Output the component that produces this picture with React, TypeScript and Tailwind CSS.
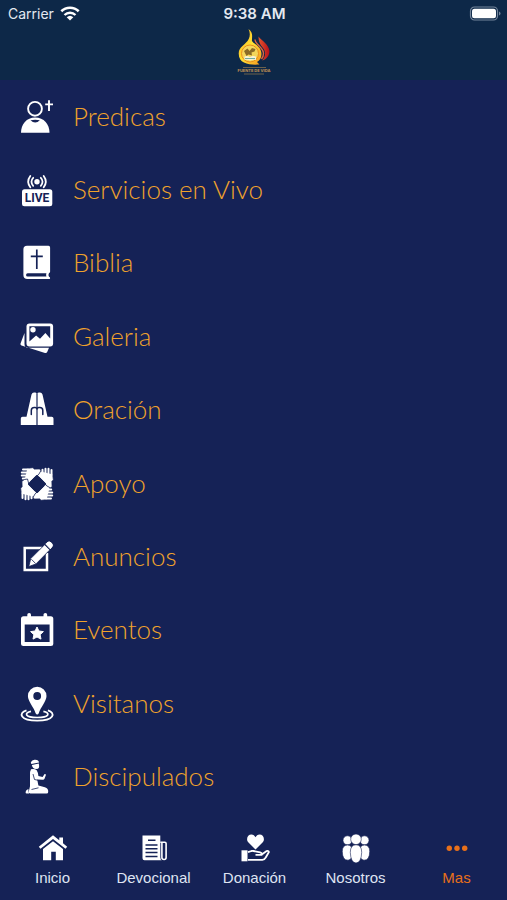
import type { ReactNode } from "react";

const BG = "#152256";

function PredicasIcon() {
  return (
    <>
      <circle cx="16" cy="9.8" r="6.9" fill="none" stroke="white" strokeWidth="1.9" />
      <path d="M30 1.3v10.7M26.2 5.4h7.8" stroke="white" strokeWidth="1.9" />
      <path d="M2 33.8c0-8.5 5.5-15.3 14.2-15.3S30.5 25.3 30.5 33.8z" fill="white" />
      <path d="M11.5 21.3q4.7-1.3 9.4 0q-4.7 4.6-9.4 0z" fill={BG} />
    </>
  );
}

function LiveIcon() {
  return (
    <>
      <circle cx="18" cy="9.8" r="2.7" fill="white" />
      <path
        d="M14.2 5.8a5.5 5.5 0 0 0 0 8M21.8 5.8a5.5 5.5 0 0 1 0 8M11.3 4a9.5 9.5 0 0 0 0 11.3M24.7 4a9.5 9.5 0 0 1 0 11.3"
        fill="none"
        stroke="white"
        strokeWidth="1.8"
        strokeLinecap="round"
      />
      <rect x="3" y="17.2" width="30.3" height="17" rx="2.5" fill="white" />
      <text
        x="18"
        y="30"
        textAnchor="middle"
        fontSize="12"
        fontWeight="700"
        fontFamily="Roboto, sans-serif"
        fill={BG}
      >
        LIVE
      </text>
    </>
  );
}

function BibliaIcon() {
  return (
    <>
      <path d="M8 .8h21.5a1.6 1.6 0 0 1 1.6 1.6v24.4a1.3 1.3 0 0 1-1 1.3c-.8 1.2-.8 2.5 0 3.6.7.3 1 .8 1 1.2 0 .8-.5 1.2-1.3 1.2H8.4a4 4 0 0 1-4-4V4.800a3.8 3.8 0 0 1 3.6-4z" fill="white" />
      <path d="M17.8 4.5v19.5M11.8 11.3h12" stroke={BG} strokeWidth="1.7" />
      <path d="M8.7 28.3h18.7q-.6 1.7 0 3.3H8.700a1.6 1.6 0 0 1 0-3.3z" fill={BG} />
    </>
  );
}

function GaleriaIcon() {
  return (
    <>
      <path d="M5.5 14L1.5 24.5q-.4 1.5 1 2l23.500 7.500q1.600.4 2.200-1l1.800-4.300H9.300q-3.800 0-3.800-3.800z" fill="white" />
      <rect x="7.5" y="4.5" width="26.6" height="22.9" rx="3" fill="white" />
      <path d="M10.4 7.3h20.8v12.2l-4.8-5.5-5.4 5.8-3.9-3.3-6.7 6z" fill={BG} />
      <circle cx="14" cy="10.8" r="2.7" fill="white" />
    </>
  );
}

function OracionIcon() {
  return (
    <>
      <path d="M12.5 2.5Q13.2.6 15 .6h1.200q1.600 0 1.800 1.800.2-1.800 1.800-1.800H21q1.800 0 2.500 1.900l5 22.300h4.200q1.800 0 1.800 1.800v6.500H1.800v-6.500q0-1.800 1.800-1.800h3.900z" fill="white" />
      <path d="M18 1.5v31.8" stroke={BG} strokeWidth="1.2" />
      <path d="M12.3 22.5v-4q0-3 3-3H16q2 0 2 2 0-2 2-2h.8q3 0 3 3v4" fill="none" stroke={BG} strokeWidth="1.5" strokeLinecap="round" />
    </>
  );
}

function ApoyoIcon() {
  return (
    <>
      {[0, 90, 180, 270].map((angle) => (
        <g key={angle} transform={`rotate(${angle} 18 18)`}>
          <path
            d="M8 2.300l5.500-.6q1.500 0 1.600 1.400l5.700-.2q2.200 2.200 2.200 5.600l-5.700 1.500-5.700 5.500q.5 1.800-1 2.300-1.500.2-2.400-1.700L5 14.300z"
            fill="white"
            stroke={BG}
            strokeWidth=".8"
          />
          <path
            d="M4 3.5h5M2.8 6.5h6M2.8 9.5h6M3.800 12.500h5"
            stroke="white"
            strokeWidth="2"
            strokeLinecap="round"
          />
        </g>
      ))}
      <path d="M18 10l8 8-8 8-8-8z" fill={BG} stroke={BG} strokeWidth="2" strokeLinejoin="round" />
    </>
  );
}

function AnunciosIcon() {
  return (
    <>
      <path d="M23 8.9H5.700v22h22.300V14" fill="none" stroke="white" strokeWidth="2.5" />
      <path d="M9.8 27.6l1.9-8L25.600 5.700l5.200 5.200L17 24.900z" fill="white" stroke={BG} strokeWidth=".8" />
      <path d="M26.8 5l1-1a3 3 0 0 1 4.600 4.600l-1.100 1.200z" fill="white" stroke="white" strokeLinejoin="round" />
      <path d="M12.3 20.2l4.300 4.300" stroke={BG} strokeWidth=".8" />
    </>
  );
}

function EventosIcon() {
  return (
    <>
      <rect x="8.3" y="1" width="3.7" height="8" rx="1.8" fill="white" />
      <rect x="24.5" y="1" width="3.7" height="8" rx="1.8" fill="white" />
      <rect x="2" y="4.3" width="32.3" height="29.6" rx="2.5" fill="white" />
      <path d="M5.7 12.5h24.900v17.500H5.700z" fill={BG} />
      <path d="M18 15l1.900 4 4.500.6-3.300 3.100.9 4.400-4-2.100-4 2.100.9-4.400-3.300-3.100 4.500-.6z" fill="white" stroke="white" strokeLinejoin="round" />
    </>
  );
}

function VisitanosIcon() {
  return (
    <>
      <path d="M12 25.3c-7 1.500-6.500 6.200 6.200 6.200s13.200-4.700 6.200-6.200" fill="none" stroke="white" strokeWidth="1.7" />
      <path d="M7.5 24.300C-1 27 1 34.600 18.200 34.600S37 27 28.900 24.300" fill="none" stroke="white" strokeWidth="1.8" />
      <path
        d="M18.200.8a9.300 9.300 0 0 1 9.300 9.300c0 5.300-6.100 11.500-7.700 17.200q-1.600 2.600-3.200 0C15 21.600 8.900 15.400 8.900 10.100A9.300 9.300 0 0 1 18.200.8zm0 5.300a3.900 3.900 0 1 0 0 7.800 3.900 3.900 0 0 0 0-7.800z"
        fill="white"
        fillRule="evenodd"
      />
    </>
  );
}

function DiscipuladosIcon() {
  return (
    <>
      <path d="M11.8 3.3Q13.300.2 16.300.7q3.400.3 3.800 2.700l-7.800 1.500z" fill="white" />
      <path d="M12.8 6l7-1.400q.5 2.400.2 3.800-.6 1.800-3 1.700-3.300 0-4.200-4.100z" fill="white" />
      <path d="M12 10.300q3.500-.8 5.700 1 1.500 2.400 1.700 5.700l4.200.9 2-2.800q1.200-.3 1.300.9l-1.500 4.100q-.6.800-1.500.7l-5.700-.2 1.200 5.800 6.500 1.800q3.700 1.400 3.300 4.700 0 1.700-1.700 1.700H11.300q-1.700 0-1.500-2l1.200-5.300V17q-.5-4.300 1-6.700z" fill="white" />
      <path d="M14 15l1.500 5.500 3.500.8M12.500 30.500l7-1.700" fill="none" stroke={BG} strokeWidth=".8" />
      <path d="M9.600 30.300q-2.800.2-3 3.200 0 1.100 1 1.100h2.500q-1.200-2-.5-4.300z" fill="white" />
    </>
  );
}

function InicioIcon() {
  return (
    <>
      <path d="M15 1.3L.8 12.700l1.700 2L15 5l12.500 9.700 1.700-2-4.200-3.400V3.500h-3.700v2.800z" fill="white" />
      <path d="M15 7.200l10 7.900v11.100h-7.200v-8.500h-4.600v8.500H5V15.100z" fill="white" />
    </>
  );
}

function DevocionalIcon() {
  return (
    <>
      <path d="M3.500 1.500h17.800v22q0 2.700 2 2.700H5.500q-2 0-2-2z" fill="white" />
      <path d="M21.300 8.200h4.500q1.300 0 1.300 1.300v14q0 2-2 2-2.200 0-2.200-2V8.200" fill="none" stroke="white" strokeWidth="1.6" />
      <path d="M9 6.200h7.500M6.500 11h12M6.500 14.800h12M6.500 18.600h12M6.500 22.400h12" stroke={BG} strokeWidth="1.5" />
    </>
  );
}

function DonacionIcon() {
  return (
    <>
      <path d="M15.500 15.500L8 8C5.700 4.700 8 .6 11.400.6c2 0 3.200 1.200 4.100 2.700.9-1.500 2.100-2.700 4.100-2.700C23 .6 25.300 4.700 23 8z" fill="white" />
      <rect x="1.5" y="16.3" width="6" height="11" fill="white" />
      <path
        d="M8 18.200l3.500-1.200q1-.2 2 0l6.700 1.300q2 .5 1.600 2.500h-6.300M21.800 20.500l4.800-3.400q1.800-.7 2.300.9l-3.300 5.700q-1 2-3.300 2.200H8"
        fill="none"
        stroke="white"
        strokeWidth="1.8"
        strokeLinejoin="round"
      />
    </>
  );
}

function NosotrosIcon() {
  return (
    <g fill="white" stroke={BG} strokeWidth=".6">
      <circle cx="6.5" cy="6.3" r="4.5" />
      <circle cx="23.5" cy="6.3" r="4.5" />
      <path d="M6.500 11q5 0 5 6.500 0 8.500-4.500 8.700-5.700 0-5.700-8.700 0-6.500 5.200-6.500z" />
      <path d="M23.500 11q-5 0-5 6.500 0 8.500 4.500 8.700 5.700 0 5.700-8.700 0-6.500-5.200-6.500z" />
      <circle cx="15" cy="5.3" r="5.3" />
      <path d="M15 10.800q5.700 0 5.700 7.500Q20.300 28.800 15 29q-5.300-.2-5.700-10.700 0-7.500 5.700-7.500z" />
    </g>
  );
}

function MasIcon() {
  return (
    <g fill="currentColor">
      <circle cx="7.3" cy="14.3" r="2.7" />
      <circle cx="15" cy="14.3" r="2.7" />
      <circle cx="22.7" cy="14.3" r="2.7" />
    </g>
  );
}

function Logo() {
  return (
    <svg className="h-12 w-10" viewBox="0 0 40 48" role="img" aria-label="Fuente de Vida">
      <defs>
        <linearGradient id="flame" x1="0" y1="0" x2="1" y2="1">
          <stop offset="0" stopColor="#f6a81c" />
          <stop offset=".5" stopColor="#ffe234" />
          <stop offset="1" stopColor="#f7941d" />
        </linearGradient>
        <linearGradient id="ember" x1="0" y1="0" x2="1" y2="0">
          <stop offset="0" stopColor="#e8552c" />
          <stop offset="1" stopColor="#b3101b" />
        </linearGradient>
      </defs>
      <path d="M24.500 8.500c3.500 4.500 10.500 8 10.900 14.500.2 4.500-3 8.500-7.200 9.500 4.200-5 3.500-9.500 0-13.500-2.500-3-3.700-6-3.700-10.500z" fill="url(#ember)" />
      <path d="M21 11.500c0 5 8.500 8 8.500 14 0 2-.8 4-2 5.500" fill="none" stroke="#dd6540" strokeWidth="1.4" />
      <path d="M14.500 1c5.500 4 3 9 3.500 12 1 2.500 9.500 5.500 9.500 13 0 4-2 6.500-4.500 8l2.500 2.500c-9 .5-20.800 0-20.800-11 0-7 7.500-9 10-14.500 1.500-3 1.500-6.500-.2-10z" fill="url(#flame)" />
      <circle cx="16" cy="25.5" r="8.5" fill="#f4d65a" stroke="#e98b1e" />
      <path d="M10 23l3.500-2.500 2 2.500 2.500-3 3.500 1-1 2.500-3 1 .5 3-3.500-1-2 1.500z" fill="#8a6b26" />
      <path d="M10.500 28.500q3-1 5.500.5 2.500-1.500 6-.5v3.500q-3-.5-6 .5-2.500-1-5.500-.5z" fill="#f5f2d8" />
      <path d="M11 30.500h10" stroke="#62a399" strokeWidth=".9" />
      <path d="M9 39.500h23M10 46h20" stroke="#94794f" strokeWidth=".7" />
      <text x="20" y="44" textAnchor="middle" fontSize="4" fontWeight="700" fontFamily="Inter, sans-serif" fill="#c49353">
        FUENTE DE VIDA
      </text>
    </svg>
  );
}

const MENU: { label: string; icon: ReactNode }[] = [
  { label: "Predicas", icon: <PredicasIcon /> },
  { label: "Servicios en Vivo", icon: <LiveIcon /> },
  { label: "Biblia", icon: <BibliaIcon /> },
  { label: "Galeria", icon: <GaleriaIcon /> },
  { label: "Oración", icon: <OracionIcon /> },
  { label: "Apoyo", icon: <ApoyoIcon /> },
  { label: "Anuncios", icon: <AnunciosIcon /> },
  { label: "Eventos", icon: <EventosIcon /> },
  { label: "Visitanos", icon: <VisitanosIcon /> },
  { label: "Discipulados", icon: <DiscipuladosIcon /> },
];

const TABS: { label: string; icon: ReactNode; active?: boolean }[] = [
  { label: "Inicio", icon: <InicioIcon /> },
  { label: "Devocional", icon: <DevocionalIcon /> },
  { label: "Donación", icon: <DonacionIcon /> },
  { label: "Nosotros", icon: <NosotrosIcon /> },
  { label: "Mas", icon: <MasIcon />, active: true },
];

function StatusBar() {
  return (
    <div className="grid h-7 grid-cols-3 items-center pl-2 pr-1.5 font-['Inter',sans-serif] text-[15px] leading-5 text-[#e4e9f0]">
      <div className="flex items-center gap-1.5">
        <span className="text-sm">Carrier</span>
        <svg className="h-4 w-5" viewBox="0 0 20 16" aria-hidden="true">
          <path d="M1.3 5.3a12.500 12.500 0 0 1 17.400 0" fill="none" stroke="white" strokeWidth="2.6" />
          <path d="M4.500 9a8 8 0 0 1 11 0" fill="none" stroke="white" strokeWidth="2.4" />
          <path d="M10 14.500l-3.300-3.200a4.800 4.800 0 0 1 6.600 0z" fill="white" />
        </svg>
      </div>
      <span className="text-center font-semibold">9:38 AM</span>
      <svg className="h-4 w-8 justify-self-end" viewBox="0 0 32 16" aria-hidden="true">
        <rect x="1.5" y="1" width="27" height="13" rx="4" fill="none" stroke="#74859b" strokeWidth="1.2" />
        <rect x="3" y="2.7" width="24" height="9.6" rx="2.5" fill="white" />
        <path d="M30 5.500q1.500.6 1.500 2T30 9.500z" fill="#74859b" />
      </svg>
    </div>
  );
}

export default function App() {
  return (
    <div className="flex min-h-screen flex-col bg-[#152256]">
      <header className="bg-[#0d2848] pb-1">
        <StatusBar />
        <div className="flex justify-center">
          <Logo />
        </div>
      </header>

      <main className="flex flex-1 flex-col">
        <ul className="grid flex-1 auto-rows-fr">
          {MENU.map((item) => (
            <li key={item.label} className="flex">
              <a
                href="#"
                className="flex flex-1 items-center gap-[18px] px-[19px] py-3 font-['Lato',sans-serif] text-[26px] font-light leading-8 text-[#f0a22c]"
              >
                <svg className="size-9 shrink-0" viewBox="0 0 36 36" aria-hidden="true">
                  {item.icon}
                </svg>
                <span className="pb-0.5">{item.label}</span>
              </a>
            </li>
          ))}
        </ul>
      </main>

      <nav className="grid grid-cols-5 pb-3 pl-0.5 pt-5">
        {TABS.map((tab) => (
          <a
            key={tab.label}
            href="#"
            aria-current={tab.active ? "page" : undefined}
            className={`flex flex-col items-center gap-1 font-['Liberation_Sans',sans-serif] text-[15px] leading-5 ${
              tab.active ? "text-[#e8701a]" : "text-[#dfe4f2]"
            }`}
          >
            <svg className="size-[30px]" viewBox="0 0 30 30" aria-hidden="true">
              {tab.icon}
            </svg>
            {tab.label}
          </a>
        ))}
      </nav>
    </div>
  );
}
